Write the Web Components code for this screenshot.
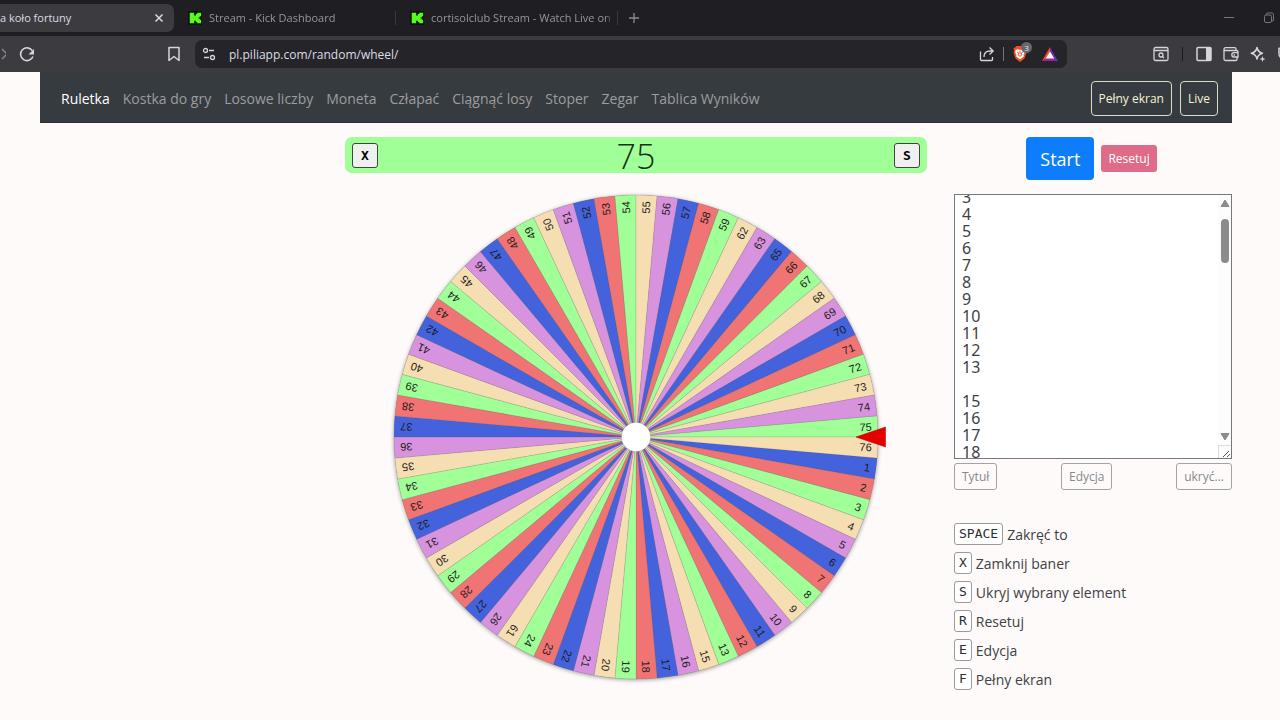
<!DOCTYPE html>
<html lang="pl">
<head>
<meta charset="utf-8">
<title>Internetowa koło fortuny</title>
<style>
html, body { margin: 0; }
body { min-height: 100vh; background: #fdfaf9; color: #3e4145; font-family: "Open Sans", "Noto Sans", sans-serif; font-size: 14px; }
</style>
</head>
<body>
<browser-chrome></browser-chrome>
<wheel-page></wheel-page>
<script>
const ITEMS = [];
for (let n = 1; n <= 13; n++) ITEMS.push(n);
for (let n = 15; n <= 24; n++) ITEMS.push(n);
ITEMS.push(61);
for (let n = 26; n <= 59; n++) ITEMS.push(n);
ITEMS.push(62, 63);
for (let n = 65; n <= 76; n++) ITEMS.push(n);

function define(name, html, ready) {
  const template = document.createElement('template');
  template.innerHTML = html;
  customElements.define(name, class extends HTMLElement {
    constructor() {
      super();
      this.attachShadow({ mode: 'open' }).append(template.content.cloneNode(true));
    }
    connectedCallback() { if (ready) ready(this.shadowRoot, this); }
  });
}

const ICONS = {
  close: '<path d="M4.5 4.5l7 7M11.5 4.5l-7 7" stroke-width="1.5"/>',
  plus: '<path d="M8 3v10M3 8h10"/>',
  minimise: '<path d="M3 7.5h10" stroke-width="1"/>',
  restore: '<rect x="3.5" y="5" width="7" height="7.500" rx="1.500" stroke-width="1"/><path d="M5.500 5V4a1 1 0 0 1 1-1H11a1.500 1.500 0 0 1 1.500 1.500V10a1 1 0 0 1-1 1h-1" stroke-width="1"/>',
  forward: '<path d="M2 3l5 5-5 5"/>',
  reload: '<path d="M13.300 4.600A6.400 6.400 0 1 0 14 10.500" stroke-width="1.600"/><path d="M9.500 8.500H15V3z" fill="currentColor" stroke="none"/>',
  bookmark: '<path d="M3 1.500h10v13L8 10.500l-5 4z" stroke-width="1.500" stroke-linejoin="round"/>',
  tune: '<circle cx="4.500" cy="4.500" r="2"/><path d="M8 4.500h5M3 11.500h5"/><circle cx="11.500" cy="11.500" r="2"/>',
  share: '<path d="M1.500 5.500v8a1 1 0 0 0 1 1h10a1 1 0 0 0 1-1V11" stroke-width="1.300"/><path d="M5 11c0-4 2.500-6 6-6h2.500M10.500 1.500L14.200 5l-3.700 3.500" stroke-width="1.300"/>',
  brave: '<path d="M4.500 0h7l1.500 1.500L14.500 2l-.5 3 .5 2-2 5.500L8 16l-4.500-3.500L1.500 7 2 5l-.5-3L3 1.500z" fill="#f0501f" stroke="none"/><path d="M3.500 4l2.500-.7L8 4l2-.7 2.500.7.3 2.500-1.300 2.500.3 1.500L8 13.200 4.200 10.500l.3-1.500L3.200 6.500z" fill="#fff" stroke="none"/><path d="M5 6l1.700.8L6 9l2 1.300L10 9l-.7-2.200L11 6M8 4.500V8" stroke="#f0501f" stroke-width=".9"/>',
  bat: '<path d="M8 1L0 15l5-2.500L8 6z" fill="#ff4724" stroke="none"/><path d="M0 15h16l-4.500-3h-7z" fill="#9e1f9b" stroke="none"/><path d="M16 15L8 1v5l3.500 6.500z" fill="#6a2bb8" stroke="none"/><path d="M8 5.500l4.300 7H3.700z" fill="#fff" stroke="none"/>',
  find: '<rect x="1" y="1.500" width="14" height="13" rx="1.500"/><path d="M1 4.500h14" stroke-width="1.500"/><circle cx="8" cy="9" r="2"/><path d="M9.500 10.500l1.500 1.500"/>',
  panel: '<rect x="1" y="1.500" width="14" height="13" rx="1" stroke-width="1.500"/><path d="M10 1.500h5v13h-5z" fill="currentColor" stroke="none"/>',
  wallet: '<path d="M13 5V3a1.300 1.300 0 0 0-1.300-1.300H2.500A1.500 1.500 0 0 0 1 3.200V13a1.500 1.500 0 0 0 1.500 1.500h10A1.300 1.300 0 0 0 14 13V11M1 4.500h12.500a1.500 1.500 0 0 1 1.500 1.500v5h-4a2.200 2.200 0 0 1 0-4.400h4M10.500 9h1.500"/>',
  spark: '<path d="M7 1.500c.6 3.300 2 4.900 5.500 5.700C9 8 7.600 9.500 7 13 6.400 9.500 5 8 1.200 7.200 5 6.400 6.400 4.800 7 1.500z" stroke-width="1.500" stroke-linejoin="round"/><path d="M12.500 10l.8 2.200 2.200.8-2.200.8-.8 2.200-.8-2.200L9.500 13l2.200-.8z" fill="currentColor" stroke="none"/>',
  shield: '<path d="M8 1.500l-6 1V8c0 3 3 5 6 6.500 3-1.500 6-3.500 6-6.500V2.500z" stroke-width="1.500"/>',
  kick: '<rect width="16" height="16" fill="#0b1408" stroke="none"/><path d="M2 2h5v3h2V3.500h1.500V2H15v4h-1.500v1.500H12v1h1.500V10H15v4h-4.500v-1.500H9V11H7v3H2z" fill="#55fb20" stroke="none"/>'
};

define('ui-icon', `<style>
  :host { display: inline-flex; flex: none; width: 16px; height: 16px; }
  :host([name="kick"]) { width: 14px; height: 14px; }
  svg { width: 100%; height: 100%; fill: none; stroke: currentColor; stroke-width: 1.3; }
</style><svg viewBox="0 0 16 16" aria-hidden="true"></svg>`, (root, host) => {
  root.querySelector('svg').innerHTML = ICONS[host.getAttribute('name')];
});

define('browser-tab', `<style>
  :host { display: flex; align-items: center; flex: 0 1 221px; min-width: 0; box-sizing: border-box; height: 28px; padding: 0 3px 0 14px; gap: 7px; color: #97969b; font-size: 11px; }
  :host([active]) { flex-basis: 174px; padding: 0 7px 0 0; background: #3c3b40; border-radius: 0 7px 7px 0; color: #dcdce0; }
  :host(:not([active])) .label { mask-image: linear-gradient(90deg, #000 95%, transparent); }
  .label { flex: 1; min-width: 0; padding-bottom: 2px; overflow: hidden; white-space: nowrap; }
</style><slot name="icon"></slot><span class="label"><slot></slot></span><slot name="close"></slot>`);

define('browser-chrome', `<style>
  :host { display: block; overflow: hidden; color: #d6d5da; }
  button { display: inline-flex; padding: 0; border: 0; background: none; color: inherit; font: inherit; }
  .tabs { display: flex; align-items: center; height: 36px; padding-right: 3px; background: #1f1e23; }
  .line { flex: none; width: 1px; height: 14px; background: #3a393e; }
  .gap { flex: 1; }
  .new { margin-left: 8px; color: #8b8a8f; }
  .win { gap: 24px; display: flex; color: #77767b; }
  .bar { display: flex; align-items: center; height: 36px; background: #3c3b40; }
  .left { display: flex; align-items: center; justify-content: space-between; flex: none; box-sizing: border-box; width: 195px; padding-right: 13px; }
  .nav { display: flex; gap: 13px; }
  .nav button:first-child { width: 6px; overflow: hidden; color: #8d8c91; }
  .address { display: flex; align-items: center; flex: 1; min-width: 0; box-sizing: border-box; height: 28px; padding: 0 9px 0 6px; gap: 12px; border-radius: 7px; background: #252429; }
  input { flex: 1; min-width: 0; border: 0; padding: 0; outline: 0; background: none; color: #dddce1; font: 12px "Open Sans", "Noto Sans", sans-serif; }
  .marks { display: flex; align-items: center; gap: 8px; }
  .shield { display: flex; position: relative; margin-right: 6px; }
  .count { position: absolute; left: 9px; top: -4px; width: 11px; height: 11px; border-radius: 6px; background: #66686d; color: #e8e8e8; font-size: 8px; line-height: 11px; text-align: center; }
  .tools { display: flex; align-items: center; flex: none; box-sizing: border-box; width: 213px; padding-left: 86px; gap: 13px; overflow: hidden; }
  .set { display: flex; gap: 11px; }
  .dark { background: #1b1a1e; }
  .pale { background: #77767b; }
</style>
<div class="tabs">
  <browser-tab active>a koło fortuny<button slot="close" aria-label="Zamknij kartę"><ui-icon name="close"></ui-icon></button></browser-tab>
  <browser-tab><ui-icon slot="icon" name="kick"></ui-icon>Stream - Kick Dashboard</browser-tab>
  <span class="line"></span>
  <browser-tab><ui-icon slot="icon" name="kick"></ui-icon>cortisolclub Stream - Watch Live on Kick</browser-tab>
  <span class="line"></span>
  <button class="new" aria-label="Nowa karta"><ui-icon name="plus"></ui-icon></button>
  <span class="gap"></span>
  <span class="win"><button aria-label="Minimalizuj"><ui-icon name="minimise"></ui-icon></button><button aria-label="Przywróć"><ui-icon name="restore"></ui-icon></button></span>
</div>
<div class="bar">
  <div class="left">
    <span class="nav"><button aria-label="Dalej"><ui-icon name="forward"></ui-icon></button><button aria-label="Odśwież"><ui-icon name="reload"></ui-icon></button></span>
    <button aria-label="Zakładka"><ui-icon name="bookmark"></ui-icon></button>
  </div>
  <div class="address">
    <ui-icon name="tune"></ui-icon>
    <input type="text" aria-label="Adres" value="pl.piliapp.com/random/wheel/">
    <span class="marks"><button aria-label="Udostępnij"><ui-icon name="share"></ui-icon></button><span class="line pale"></span><span class="shield"><ui-icon name="brave"></ui-icon><span class="count">3</span></span><ui-icon name="bat"></ui-icon></span>
  </div>
  <div class="tools">
    <ui-icon name="find"></ui-icon><span class="line dark"></span>
    <span class="set"><ui-icon name="panel"></ui-icon><ui-icon name="wallet"></ui-icon><ui-icon name="spark"></ui-icon><ui-icon name="shield"></ui-icon></span>
  </div>
</div>`);

define('site-nav', `<style>
  :host { display: block; }
  nav { display: flex; align-items: center; justify-content: space-between; box-sizing: border-box; height: 51px; padding: 2px 14px 0 21px; background: #363b3f; border-bottom: 1px solid #2e3034; }
  .links { display: flex; gap: 13px; }
  .actions { display: flex; gap: 8px; }
  a { color: #9b9da0; text-decoration: none; white-space: nowrap; }
  a[aria-current] { color: #fff; }
  button { height: 35px; padding: 0 7px; border: 1px solid #d9dcc9; border-radius: 4px; background: none; color: #f4f4d8; font: inherit; font-size: 12px; }
</style>
<nav>
  <div class="links"><a href="#ruletka" aria-current="page">Ruletka</a><a href="#kostka">Kostka do gry</a><a href="#liczby">Losowe liczby</a><a href="#moneta">Moneta</a><a href="#czlapac">Człapać</a><a href="#losy">Ciągnąć losy</a><a href="#stoper">Stoper</a><a href="#zegar">Zegar</a><a href="#tablica">Tablica Wyników</a></div>
  <div class="actions"><button>Pełny ekran</button><button>Live</button></div>
</nav>`);

define('result-banner', `<style>
  :host { display: flex; align-items: center; justify-content: space-between; box-sizing: border-box; height: 36px; padding: 0 7px; border-radius: 7px; background: #a1ff98; }
  output { padding-top: 2px; color: #16321a; font-size: 34px; font-weight: 300; line-height: 36px; }
  button { width: 26px; height: 25px; padding: 0; border: 1px solid #3c463b; border-radius: 3px; background: #f0f0f0; color: #000; font: bold 13px "DejaVu Sans Mono", monospace; }
</style><button>X</button><output><slot></slot></output><button>S</button>`);

define('fortune-wheel', `<style>
  :host { display: block; }
  svg { display: block; width: 100%; overflow: visible; }
  .disc { filter: drop-shadow(0 1px 2px #0006); }
  .slices path { stroke: #5554; stroke-width: .5; }
  text { fill: #1c1c1c; font: 11px "Liberation Sans", Arial, sans-serif; text-anchor: end; }
</style><svg viewBox="-291 -242 582 484" role="img" aria-label="Koło fortuny">
  <circle class="disc" r="242" fill="#888"/><g class="slices"></g>
  <circle r="14.500" fill="#fff" stroke="#0003" stroke-width=".5"/>
  <path d="M220 0L249.500-10v20z" fill="#e60000" stroke="#a40000" stroke-width=".5"/>
</svg>`, root => {
  const colours = ['#4462dc', '#f07474', '#a1ff98', '#f6deb3', '#d793dd'];
  const step = 360 / ITEMS.length;
  const rad = step / 2 * Math.PI / 180;
  const x = 242 * Math.cos(rad), y = 242 * Math.sin(rad);
  root.querySelector('.slices').innerHTML = ITEMS.map((n, i) => {
    const colour = colours[(n > 74 ? i + 2 : i) % 5];
    return `<g transform="rotate(${(i + 1.5) * step})"><path fill="${colour}" d="M0 0L${x} ${-y}A242 242 0 0 1 ${x} ${y}z"/><text x="236" y="4">${n}</text></g>`;
  }).join('');
});

define('item-list', `<style>
  :host { display: block; position: relative; height: 265px; }
  textarea { display: block; box-sizing: border-box; width: 100%; height: 100%; padding: 0 16px 0 7px; border: 1px solid #77787b; border-radius: 0; outline: 0; resize: none; background: #fff; color: #3e4145; font: 16px/17px "Noto Sans", sans-serif; overflow-y: scroll; scrollbar-width: none; }
  .scroll { position: absolute; top: 1px; right: 1px; bottom: 1px; width: 13px; display: flex; flex-direction: column; align-items: center; background: #fcfcfc; color: #8b8b8b; }
  svg { display: block; fill: currentColor; }
  .up { margin: 4px 0 12px; }
  .thumb { width: 8px; height: 44px; border-radius: 4px; background: #8b8b8b; }
  .down { margin: auto 0 4px; }
  .grip { border-top: 1px solid #ddd; border-left: 1px solid #ddd; fill: none; stroke: #555; }
</style><textarea aria-label="Lista elementów" spellcheck="false"></textarea>
<div class="scroll" aria-hidden="true"><svg class="up" width="10" height="8"><path d="M1 7.500h8L5 1z" stroke="currentColor" stroke-linejoin="round"/></svg><span class="thumb"></span><svg class="down" width="10" height="8"><path d="M1 .5h8L5 7z" stroke="currentColor" stroke-linejoin="round"/></svg><svg class="grip" width="12" height="12"><path d="M4 11l6-6M8 11l3-3"/></svg></div>`, root => {
  const area = root.querySelector('textarea');
  const lines = ITEMS.slice();
  lines.splice(13, 0, '');
  area.value = lines.join('\n');
  area.scrollTop = 40;
});

define('key-hint', `<style>
  :host { display: flex; align-items: center; gap: 4px; height: 22px; }
  kbd { box-sizing: border-box; height: 22px; padding: 0 4px; border: 1px solid #9b9b9e; border-radius: 3px; background: #fff; color: #2c2e31; font: 13px/20px "DejaVu Sans Mono", monospace; }
</style><kbd></kbd><span><slot></slot></span>`, (root, host) => {
  root.querySelector('kbd').textContent = host.getAttribute('key');
});

define('side-panel', `<style>
  :host { display: block; }
  button { font: inherit; border: 0; border-radius: 4px; padding: 0; color: #fff; }
  .go { display: flex; align-items: center; justify-content: center; gap: 7px; padding-right: 3px; margin-bottom: 14px; }
  .start { height: 43px; padding: 0 14px; background: #0d7dfb; font-size: 18px; }
  .reset { height: 27px; padding: 0 7px; border-radius: 3px; background: #df6b88; font-size: 12px; }
  .edit { display: flex; justify-content: space-between; margin-top: 4px; }
  .edit button { height: 27px; padding: 0 7px; border: 1px solid #a3a3a5; border-radius: 3px; background: transparent; color: #88898c; font-size: 12px; }
  .keys { display: flex; flex-direction: column; gap: 7px; margin-top: 33px; }
</style>
<div class="go"><button class="start">Start</button><button class="reset">Resetuj</button></div>
<item-list></item-list>
<div class="edit"><button>Tytuł</button><button>Edycja</button><button>ukryć...</button></div>
<div class="keys">
  <key-hint key="SPACE">Zakręć to</key-hint><key-hint key="X">Zamknij baner</key-hint><key-hint key="S">Ukryj wybrany element</key-hint><key-hint key="R">Resetuj</key-hint><key-hint key="E">Edycja</key-hint><key-hint key="F">Pełny ekran</key-hint>
</div>`);

define('wheel-page', `<style>
  :host { display: block; padding: 0 48px 24px 40px; }
  main { display: grid; grid-template-columns: 278px minmax(0, 1fr) 278px; gap: 27px; margin-top: 14px; }
  .play { grid-column: 2; display: flex; flex-direction: column; gap: 22px; }
</style>
<site-nav></site-nav>
<main><div class="play"><result-banner>75</result-banner><fortune-wheel></fortune-wheel></div><side-panel></side-panel></main>`);
</script>
</body>
</html>
